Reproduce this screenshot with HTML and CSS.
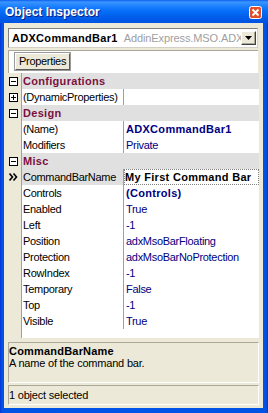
FILE: index.html
```html
<!DOCTYPE html>
<html>
<head>
<meta charset="utf-8">
<link rel="stylesheet" href="styles.css">
</head>
<body>
<div class="window">
  <div class="titlebar">
    <span class="title">Object Inspector</span>
    <span class="close"><svg width="13" height="13" viewBox="0 0 13 13"><rect x="0.5" y="0.5" width="12" height="12" rx="2" fill="#E0502A" stroke="#fff"/><path d="M3.5 3.5 L9.5 9.5 M9.5 3.5 L3.5 9.5" stroke="#fff" stroke-width="1.8"/></svg></span>
  </div>
  <div class="client">
    <div class="combo">
      <span class="combo-text"><b class="obj">ADXCommandBar1</b><span class="type">AddinExpress.MSO.ADXCommandBar</span></span>
      <span class="drop"><svg width="7" height="4" viewBox="0 0 7 4"><path d="M0 0 H7 L3.5 4 Z" fill="#000"/></svg></span>
    </div>
    <div class="tabs"><span class="tab">Properties</span></div>
    <div class="grid">
      <div class="row"><span class="gut"><svg class="box" width="9" height="9" viewBox="0 0 9 9"><rect x="0.5" y="0.5" width="8" height="8" fill="#fff" stroke="#000"/><path d="M2 4.5 H7" stroke="#000"/></svg></span><span class="cat">Configurations</span></div>
      <div class="row"><span class="gut"><svg class="box" width="9" height="9" viewBox="0 0 9 9"><rect x="0.5" y="0.5" width="8" height="8" fill="#fff" stroke="#000"/><path d="M2 4.5 H7 M4.5 2 V7" stroke="#000"/></svg></span><span class="name">(DynamicProperties)</span><span class="val"></span></div>
      <div class="row"><span class="gut"><svg class="box" width="9" height="9" viewBox="0 0 9 9"><rect x="0.5" y="0.5" width="8" height="8" fill="#fff" stroke="#000"/><path d="M2 4.5 H7" stroke="#000"/></svg></span><span class="cat">Design</span></div>
      <div class="row"><span class="gut"></span><span class="name">(Name)</span><span class="val bold">ADXCommandBar1</span></div>
      <div class="row"><span class="gut"></span><span class="name">Modifiers</span><span class="val">Private</span></div>
      <div class="row"><span class="gut"><svg class="box" width="9" height="9" viewBox="0 0 9 9"><rect x="0.5" y="0.5" width="8" height="8" fill="#fff" stroke="#000"/><path d="M2 4.5 H7" stroke="#000"/></svg></span><span class="cat">Misc</span></div>
      <div class="row sel"><span class="gut"><svg class="chev" width="9" height="8" viewBox="0 0 9 8"><path d="M0.5 0.5 L3.5 4 L0.5 7.5 M4.5 0.5 L7.5 4 L4.5 7.5" fill="none" stroke="#000" stroke-width="1.6"/></svg></span><span class="name">CommandBarName</span><span class="val edit">My First Command Bar</span></div>
      <div class="row"><span class="gut"></span><span class="name">Controls</span><span class="val bold">(Controls)</span></div>
      <div class="row"><span class="gut"></span><span class="name">Enabled</span><span class="val">True</span></div>
      <div class="row"><span class="gut"></span><span class="name">Left</span><span class="val">-1</span></div>
      <div class="row"><span class="gut"></span><span class="name">Position</span><span class="val">adxMsoBarFloating</span></div>
      <div class="row"><span class="gut"></span><span class="name">Protection</span><span class="val">adxMsoBarNoProtection</span></div>
      <div class="row"><span class="gut"></span><span class="name">RowIndex</span><span class="val">-1</span></div>
      <div class="row"><span class="gut"></span><span class="name">Temporary</span><span class="val">False</span></div>
      <div class="row"><span class="gut"></span><span class="name">Top</span><span class="val">-1</span></div>
      <div class="row"><span class="gut"></span><span class="name">Visible</span><span class="val">True</span></div>
      <div class="row filler"><span class="gut"></span><span class="blank"></span></div>
    </div>
    <div class="desc">
      <div class="desc-title">CommandBarName</div>
      <div class="desc-text">A name of the command bar.</div>
    </div>
    <div class="status">1 object selected</div>
  </div>
</div>
</body>
</html>
```
FILE: styles.css
```css
html, body {
  margin: 0;
  padding: 0;
}
body {
  width: 268px;
  height: 413px;
  overflow: hidden;
  font-family: "Liberation Sans", Arial, sans-serif;
  font-size: 11px;
  color: #000;
}
.window {
  width: 268px;
  height: 413px;
  box-sizing: border-box;
  background: linear-gradient(to right, #0831D9 0, #0054E3 2px, #0055EA 50%, #0054E3 calc(100% - 2px), #0831D9 100%);
  display: flex;
  flex-direction: column;
}
.titlebar {
  height: 23px;
  flex: none;
  display: flex;
  align-items: center;
  justify-content: space-between;
  padding: 0 6px 0 5px;
  background: linear-gradient(to bottom, #0A5FF0 0, #3D95FF 2px, #2B8BFF 4px, #1378FC 8px, #036CF6 12px, #0261EC 16px, #0058E6 20px, #0054E3 23px);
}
.title {
  color: #fff;
  font-weight: bold;
  font-size: 12px;
  letter-spacing: 0;
  text-shadow: 1px 1px 0 #0A1E80;
  margin-top: 1px;
}
.close {
  display: flex;
  width: 13px;
  height: 13px;
  margin-top: 2px;
}
.client {
  flex: 1;
  margin: 0 5px 5px 4px;
  background: #ECE9D8;
  display: flex;
  flex-direction: column;
}
.combo {
  margin: 5px 5px 0 4px;
  height: 20px;
  box-sizing: border-box;
  background: #fff;
  border: 1px solid #7F7F7F;
  border-right-color: #D4D0C8;
  border-bottom-color: #D4D0C8;
  display: flex;
  align-items: center;
  padding: 0 1px 0 3px;
  overflow: hidden;
}
.combo-text {
  flex: 1;
  white-space: nowrap;
  overflow: hidden;
  font-size: 11px;
}
.obj {
  font-weight: bold;
  letter-spacing: 0.3px;
  margin-right: 6px;
}
.type {
  color: #A0A0A0;
  letter-spacing: -0.1px;
}
.drop {
  flex: none;
  width: 15px;
  height: 14px;
  box-sizing: border-box;
  background: #ECE9D8;
  border: 1px solid;
  border-color: #fff #404040 #404040 #fff;
  box-shadow: inset -1px -1px 0 #ACA899;
  display: flex;
  align-items: center;
  justify-content: center;
}
.tabs {
  margin: 2px 5px 0 4px;
  height: 23px;
  box-sizing: border-box;
  background: #fff;
  border-top: 1px solid #ACA899;
  border-left: 1px solid #ACA899;
  padding: 2px 0 0 6px;
  display: flex;
  align-items: flex-start;
}
.tab {
  height: 17px;
  box-sizing: border-box;
  padding: 0 3px;
  line-height: 15px;
  background: #ECE9D8;
  border: 1px solid #5A5A5A;
  border-color: #fff #5A5A5A #5A5A5A #fff;
  outline: 1px solid #9A9A9A;
  letter-spacing: -0.3px;
}
.grid {
  margin: 0 4px 0 0;
  display: flex;
  flex-direction: column;
}
.row {
  display: flex;
  height: 16px;
  line-height: 16px;
  white-space: nowrap;
}
.gut {
  flex: none;
  width: 17px;
  border-right: 1px solid #A0A0A0;
  background: #ECE9D8;
  display: flex;
  align-items: center;
  padding-left: 5px;
  box-sizing: content-box;
  width: 12px;
}
.cat {
  flex: 1;
  background: #E0E0E0;
  color: #7B1040;
  font-weight: bold;
  letter-spacing: 0.3px;
  padding-left: 1px;
}
.name {
  flex: none;
  width: 100px;
  padding-left: 1px;
  background: #fff;
  border-right: 1px solid #A0A0A0;
  letter-spacing: -0.3px;
  overflow: hidden;
}
.val {
  flex: 1;
  background: #fff;
  color: #000080;
  padding-left: 2px;
  letter-spacing: -0.3px;
  overflow: hidden;
}
.val.bold {
  font-weight: bold;
  letter-spacing: 0.3px;
}
.sel .name {
  background: #E0E0E0;
}
.val.edit {
  color: #000;
  font-weight: bold;
  letter-spacing: 0.3px;
  border: 1px dotted #808080;
  line-height: 14px;
  padding-left: 0;
}
.filler {
  height: 9px;
}
.blank {
  flex: 1;
  background: #fff;
}
.chev {
  margin-left: 0;
}
.desc {
  margin: 4px 4px 0 4px;
  height: 41px;
  box-sizing: border-box;
  border: 1px solid;
  border-color: #ACA899 #fff #fff #ACA899;
  padding: 2px 0 0 0;
  line-height: 12px;
}
.desc-title {
  font-weight: bold;
  letter-spacing: 0.2px;
}
.desc-text {
  letter-spacing: -0.2px;
}
.status {
  margin: 2px 4px 0 4px;
  height: 20px;
  box-sizing: border-box;
  border: 1px solid;
  border-color: #ACA899 #fff #fff #ACA899;
  padding-left: 0;
  line-height: 18px;
  letter-spacing: -0.2px;
}
```
